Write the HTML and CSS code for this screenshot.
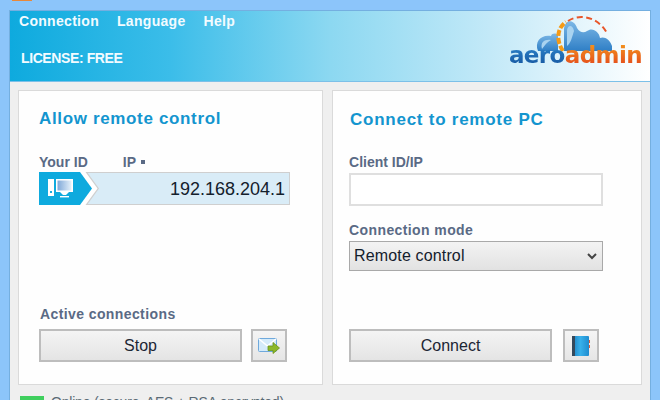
FILE: index.html
```html
<!DOCTYPE html>
<html lang="en">
<head>
<meta charset="utf-8">
<title>AeroAdmin</title>
<link rel="stylesheet" href="styles.css">
</head>
<body>
<div class="tab"></div>
<div class="window">
  <header class="header">
    <div class="header-left">
      <nav class="menu"><span>Connection</span><span>Language</span><span>Help</span></nav>
      <div class="license">LICENSE: FREE</div>
    </div>
    <div class="logo">
      <svg class="logo-art" width="100" height="40" viewBox="0 0 100 40">
        <defs><linearGradient id="cl" x1="0" x2="0" y1="0" y2="1"><stop offset="0" stop-color="#7db8e6"/><stop offset="1" stop-color="#2f7fc6"/></linearGradient></defs>
        <path d="M24 38 C20 28 28 21 37 23 C38 20 42 20 44 22 L44 38Z" fill="url(#cl)"/>
        <path d="M50 38 L50 16 C51 6 60 6 63 15 C66 20 70 20 73 18 C78 14 85 18 86 25 C90 23 96 26 98 33 L98 38Z" fill="url(#cl)"/>
        <path d="M53 33 L53 17 C54 11 59 12 60 18 C58 24 57 30 53 33Z" fill="#a9d3f0"/>
        <path d="M28 36 C26 29 31 26 37 27 C33 29 31 32 28 36Z" fill="#a9d3f0"/>
        <path d="M49 38 C41 26 44 14 52 9" fill="none" stroke="#f59a16" stroke-width="4" stroke-dasharray="6 2"/>
        <path d="M54 8 C66 0 84 4 93 20" fill="none" stroke="#e8562a" stroke-width="2" stroke-dasharray="6 3.5"/>
      </svg>
      <div class="logo-text"><span class="aero">aero</span><span class="admin">admin</span></div>
    </div>
  </header>
  <main class="content">
    <section class="panel panel-left">
      <h2 class="title">Allow remote control</h2>
      <div class="id-labels"><span class="label">Your ID</span><span class="label ip-label">IP <i class="dot"></i></span></div>
      <div class="id-box">
        <div class="id-icon">
          <svg width="26" height="20" viewBox="0 0 26 20">
            <rect x="0" y="1" width="6" height="17" fill="#fff"/>
            <rect x="2" y="13" width="2" height="2" fill="#1badde"/>
            <rect x="8" y="1" width="17" height="13" fill="#fff"/>
            <defs><linearGradient id="scr" x1="0" x2="1" y1="0" y2="0"><stop offset="0" stop-color="#7fa8d8"/><stop offset="1" stop-color="#e6f1fa"/></linearGradient></defs>
            <rect x="9.5" y="2.5" width="14" height="10" fill="url(#scr)"/>
            <path d="M12 14 H21 L18 17 H15Z" fill="#fff"/>
            <rect x="12" y="18" width="9" height="1.4" fill="#fff"/>
          </svg>
        </div>
        <div class="id-value">192.168.204.1</div>
      </div>
      <div class="bottom">
        <div class="label active">Active connections</div>
        <div class="actions">
          <button class="btn">Stop</button>
          <button class="btn-icon" aria-label="Send">
            <svg width="22" height="20" viewBox="0 0 22 20">
              <rect x="0.5" y="2.5" width="18" height="13" rx="1" fill="#d5ebfa" stroke="#6fa9dc"/>
              <path d="M1 3 L9.5 10 L18 3" fill="none" stroke="#fff" stroke-width="1.5"/>
              <path d="M10 10 H15 V6.5 L21.5 12 L15 17.5 V14.5 H10Z" fill="#8cb82a" stroke="#6b9418" stroke-width="0.8"/>
            </svg>
          </button>
        </div>
      </div>
    </section>
    <section class="panel panel-right">
      <h2 class="title">Connect to remote PC</h2>
      <div class="label client-label">Client ID/IP</div>
      <input class="client-input" type="text" aria-label="Client ID/IP">
      <div class="label mode-label">Connection mode</div>
      <div class="select"><span>Remote control</span>
        <svg width="10" height="7" viewBox="0 0 10 7"><path d="M1 1 L5 5 L9 1" fill="none" stroke="#444" stroke-width="2"/></svg>
      </div>
      <div class="bottom">
        <div class="actions">
          <button class="btn">Connect</button>
          <button class="btn-icon" aria-label="Contacts">
            <svg width="18" height="20" viewBox="0 0 18 20">
              <defs><linearGradient id="bk" x1="0" x2="1" y1="0" y2="0"><stop offset="0" stop-color="#1b7fc0"/><stop offset="0.5" stop-color="#37b0ea"/><stop offset="1" stop-color="#1f8ccf"/></linearGradient></defs>
              <rect x="0" y="0" width="17" height="20" rx="1" fill="url(#bk)"/>
              <rect x="0" y="0" width="3" height="20" fill="#34495c"/>
              <rect x="17" y="4" width="1" height="3" fill="#e0603a"/>
              <rect x="17" y="9" width="1" height="3" fill="#e0603a"/>
            </svg>
          </button>
        </div>
      </div>
    </section>
  </main>
  <footer class="status"><i class="led"></i><span>Online (secure, AES + RSA encrypted)</span></footer>
</div>
</body>
</html>
```
FILE: styles.css
```css
html, body { margin: 0; height: 100%; overflow: hidden; }
body { background: #8cc5fa; font-family: "Liberation Sans", Arial, sans-serif; position: relative; }
.tab { position: absolute; left: 12px; top: 0; width: 20px; height: 1px; background: #e8883a; }
.window { margin: 10px 9px 0 9px; height: 420px; background: #efefef; border-top: 1px solid #74afe0; border-left: 1px solid #74afe0; border-right: 1px solid #74afe0; box-sizing: border-box; display: flex; flex-direction: column; }
.header { height: 70px; flex: none; display: flex; justify-content: space-between; background: linear-gradient(90deg, #0eaade 0%, #3bbde9 25%, #8cd8f1 50%, #c3e9f8 75%, #ffffff 100%); border-bottom: 1px solid #7cc0e8; box-sizing: content-box; }
.header-left { padding-left: 9px; color: #f2fbff; font-weight: bold; font-size: 14px; }
.menu { display: flex; gap: 18px; height: 20px; line-height: 20px; letter-spacing: 0.3px; }
.license { margin-top: 18px; padding-left: 2px; line-height: 18px; font-size: 14px; letter-spacing: -0.4px; }
.logo { position: relative; width: 132px; margin-right: 8px; display: flex; flex-direction: column; align-items: flex-end; justify-content: flex-end; padding-bottom: 14px; box-sizing: border-box; }
.logo-art { position: absolute; left: 4px; top: 2px; }
.logo-text { position: relative; font-family: "DejaVu Sans", sans-serif; font-weight: bold; font-size: 23px; line-height: 24px; letter-spacing: -0.6px; }
.aero, .admin { -webkit-background-clip: text; background-clip: text; color: transparent; }
.aero { background-image: linear-gradient(#2f8ad0, #14529c); }
.admin { background-image: linear-gradient(#f59a1c, #e2431c); }
.content { flex: none; height: 295px; padding: 8px 8px 0 8px; display: flex; gap: 8px; }
.panel { background: #fefefe; border: 1px solid #dadada; box-sizing: border-box; height: 295px; display: flex; flex-direction: column; }
.panel-left { width: 306px; padding: 0 20px; }
.panel-right { width: 311px; padding: 0 16px; margin-left: 1px; }
.title { margin: 18px 0 0 0; font-size: 17px; line-height: 20px; font-weight: bold; color: #1395cf; letter-spacing: 0.65px; }
.panel-right .title { margin-left: 1px; margin-top: 19px; letter-spacing: 0.75px; }
.label { font-size: 14px; font-weight: bold; line-height: 18px; color: #5a6a85; }
.id-labels { display: flex; margin-top: 24px; }
.ip-label { margin-left: 35px; display: flex; align-items: center; gap: 5px; }
.dot { width: 4px; height: 4px; background: #5a6a85; }
.id-box { position: relative; margin-top: 1px; height: 33px; width: 251px; box-sizing: border-box; display: flex; justify-content: flex-end; align-items: center; background: #d9ecf7; border: 1px solid #cfcfcf; }
.id-box::before, .id-box::after { content: ""; position: absolute; top: -1px; height: 33px; }
.id-box::before { left: 30px; width: 29px; background: #cfcfcf; clip-path: polygon(0 0, 17px 0, 29px 16.5px, 17px 33px, 0 33px); }
.id-box::after { left: 30px; width: 27.5px; background: #fff; clip-path: polygon(0 0, 15.5px 0, 27.5px 16.5px, 15.5px 33px, 0 33px); }
.id-icon { position: absolute; z-index: 1; left: -1px; top: -1px; width: 53px; height: 33px; padding: 6px 0 0 9px; box-sizing: border-box; background: #0eaade; clip-path: polygon(0 0, 41px 0, 53px 16.5px, 41px 33px, 0 33px); }
.id-value { font-size: 18px; color: #14202c; padding-right: 4px; line-height: 30px; }
.bottom { margin-top: auto; padding-bottom: 22px; }
.active { margin-bottom: 6px; padding-left: 1px; letter-spacing: 0.4px; }
.actions { display: flex; gap: 9px; }
.btn { width: 203px; height: 33px; font: 16px "Liberation Sans", Arial, sans-serif; color: #1c2634; background: linear-gradient(#f4f4f4, #e4e4e4); border: 2px solid #bdbdbd; padding: 0; }
.btn-icon { width: 36px; height: 33px; background: linear-gradient(#f4f4f4, #e6e6e6); border: 2px solid #bdbdbd; padding: 0; display: flex; align-items: center; justify-content: center; }
.panel-right .actions { gap: 11px; }
.client-label { margin-top: 23px; }
.client-input { margin-top: 2px; width: 254px; height: 33px; box-sizing: border-box; border: 2px solid #dfdfdf; background: #fff; outline: none; padding: 0; }
.mode-label { margin-top: 15px; letter-spacing: 0.4px; }
.select { margin-top: 2px; width: 254px; height: 30px; box-sizing: border-box; border: 1px solid #a9a9a9; background: linear-gradient(#f3f3f3, #e2e2e2); display: flex; align-items: center; justify-content: space-between; padding: 0 5px 0 4px; font-size: 16px; letter-spacing: 0.15px; color: #14202c; }
.status { flex: none; display: flex; align-items: center; gap: 7px; margin-top: 10px; padding-left: 10px; font-size: 14px; letter-spacing: -0.2px; color: #5a6a75; height: 14px; }
.led { width: 24px; height: 12px; background: #3fcf5e; }
```
